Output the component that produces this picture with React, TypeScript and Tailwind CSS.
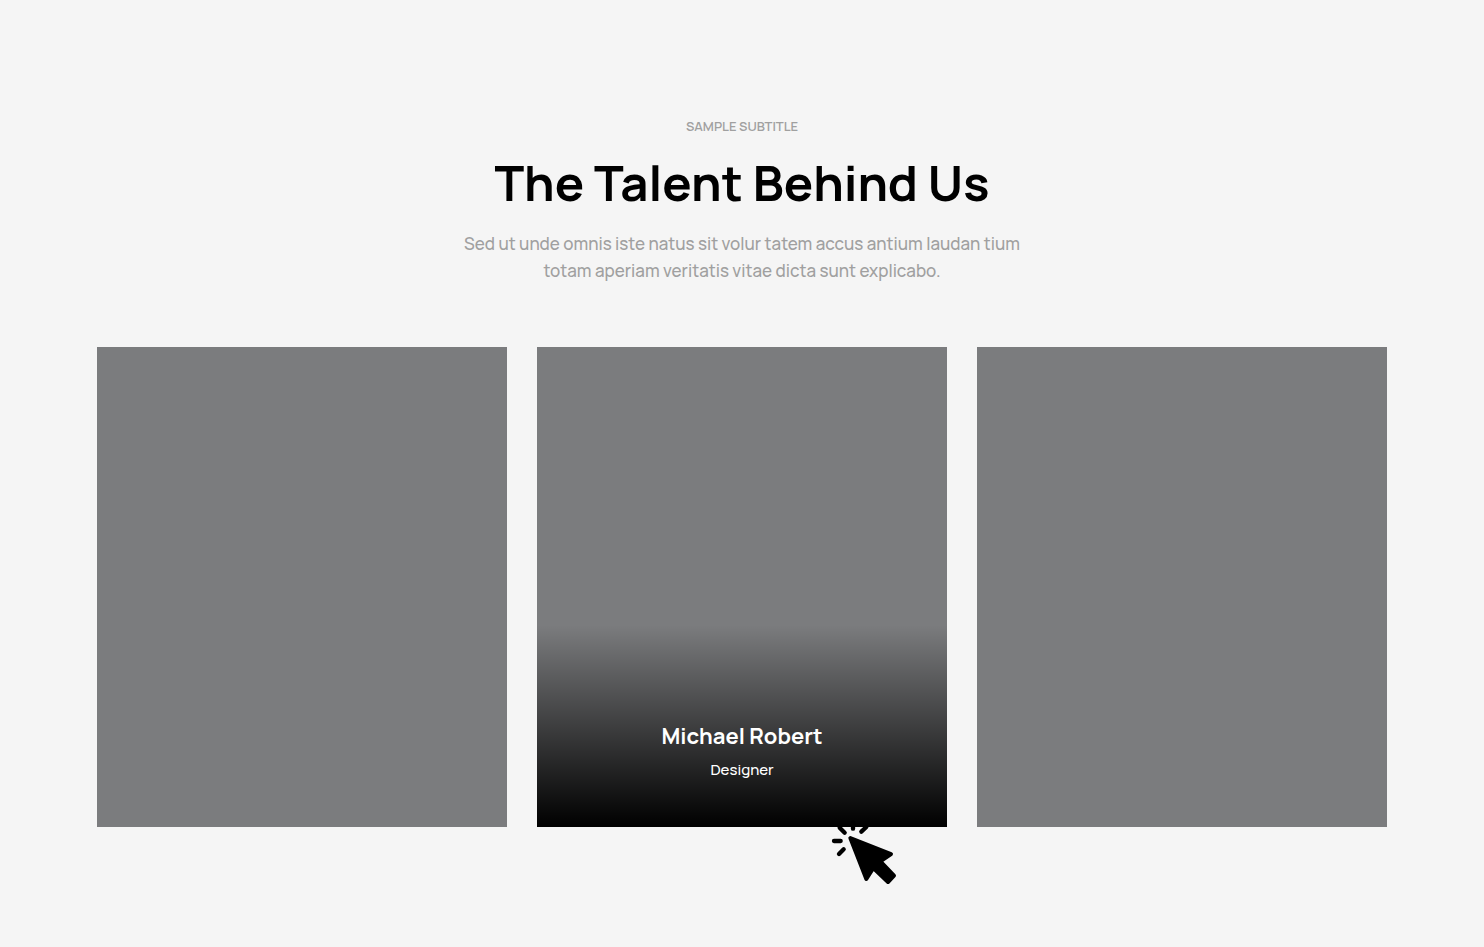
import React from "react";

type Member = { id: number; name: string; role: string; active: boolean };

const members: Member[] = [
  { id: 1, name: "", role: "", active: false },
  { id: 2, name: "Michael Robert", role: "Designer", active: true },
  { id: 3, name: "", role: "", active: false },
];

function ClickCursor() {
  return (
    <svg
      viewBox="33 12 201 198"
      className="absolute right-[49px] -bottom-[58px] z-10 h-[66px] w-[67px]"
      aria-hidden="true"
    >
      <g stroke="#000" strokeWidth="13" strokeLinecap="round" fill="none">
        <path d="M99 22V41M42 78H62M57 117L71 103M59 38L74 53M139 36L124 50" />
      </g>
      <path
        d="M91 69L213 117L181 139L222 182L204 201L160 159L139 192Z"
        fill="#000"
        stroke="#000"
        strokeWidth="12"
        strokeLinejoin="round"
      />
    </svg>
  );
}

function MemberCard({ member }: { member: Member }) {
  return (
    <article className="relative flex h-[480px] flex-col justify-end bg-[#7b7c7e]">
      {member.active && (
        <>
          <div className="flex h-[202px] flex-col items-center justify-end bg-linear-to-t from-black to-transparent pb-[45px] text-center text-white">
            <h3 className="text-[22px] leading-8 font-bold">{member.name}</h3>
            <p className="mt-[6px] text-[15px] leading-6 font-medium">{member.role}</p>
          </div>
          <ClickCursor />
        </>
      )}
    </article>
  );
}

export default function App() {
  return (
    <main className="min-h-screen bg-[#f5f5f5] px-6 pt-[116px] pb-[120px] font-['Manrope','Inter',sans-serif]">
      <header className="mx-auto flex max-w-[620px] flex-col items-center text-center">
        <p className="text-[13px] leading-5 font-semibold text-[#a0a0a0]">SAMPLE SUBTITLE</p>
        <h2 className="mt-[15px] text-[49px] leading-[64px] font-bold whitespace-nowrap text-black">
          The Talent Behind Us
        </h2>
        <p className="mt-[15px] text-[17px] leading-[27px] font-medium text-[#a0a0a0]">
          Sed ut unde omnis iste natus sit volur tatem accus antium laudan tium
          <br />
          totam aperiam veritatis vitae dicta sunt explicabo.
        </p>
      </header>
      <section className="mx-auto mt-[63px] grid max-w-[1290px] grid-cols-3 gap-[30px]">
        {members.map((member) => (
          <MemberCard key={member.id} member={member} />
        ))}
      </section>
    </main>
  );
}
